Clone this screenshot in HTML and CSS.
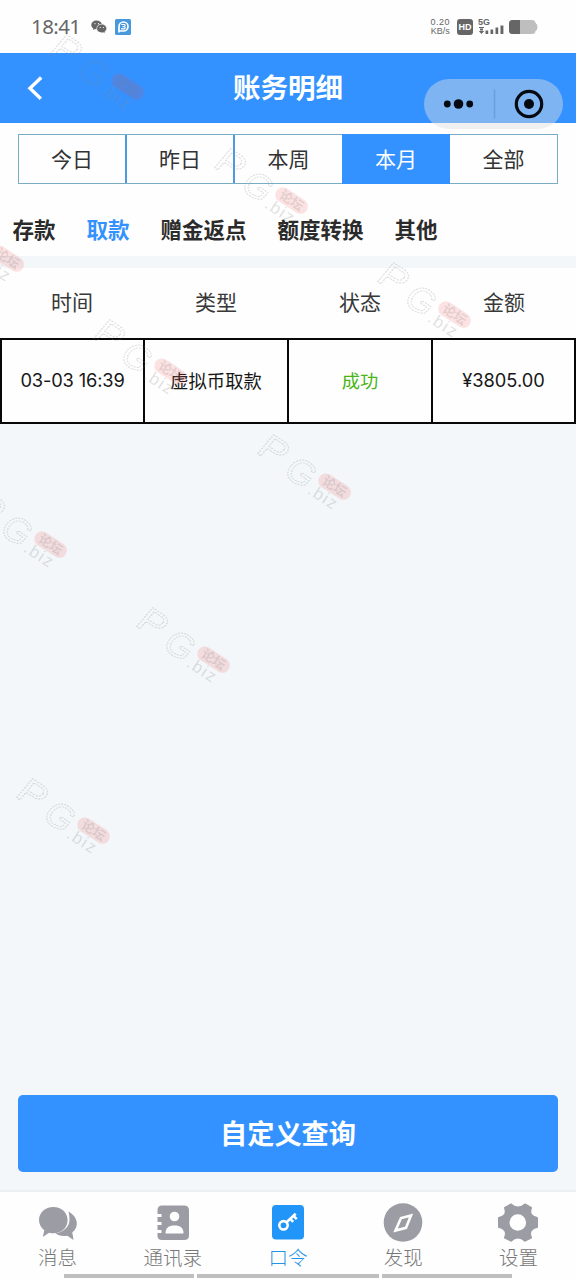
FILE: index.html
```html
<!DOCTYPE html>
<html lang="zh-CN">
<head>
<meta charset="utf-8">
<meta name="viewport" content="width=device-width, initial-scale=1">
<title>账务明细</title>
<link rel="stylesheet" href="styles.css">
</head>
<body>
<div class="app">
  <div class="status">
    <span class="clock">18:41</span>
    <svg class="wechat" width="16" height="14" viewBox="0 0 16 14"><path fill="#666" d="M5.6.5C2.6.5.3 2.4.3 4.9c0 1.4.8 2.6 2 3.400l-.5 1.700 2-1c.7.2 1.200.2 1.900.2C5.200 6 7.500 4 10.800 4 10.300 2 8.200.5 5.600.5z"/><path fill="#666" stroke="#fff" stroke-width=".4" d="M10.700 4.200c-2.700 0-4.900 1.900-4.900 4.300s2.200 4.200 4.900 4.200c.6 0 1.200-.1 1.700-.3l1.700.9-.4-1.500c1.100-.8 1.900-1.900 1.900-3.300 0-2.400-2.200-4.300-4.900-4.300z"/><g fill="#fff"><circle cx="4" cy="3.700" r=".6"/><circle cx="7.400" cy="3.700" r=".6"/><circle cx="9.200" cy="7.500" r=".6"/><circle cx="12.400" cy="7.500" r=".6"/></g></svg>
    <svg class="appicon" width="16" height="16" viewBox="0 0 16 16"><rect width="16" height="16" rx="1.500" fill="#4798dc"/><path d="M4 13.500V7.500a4.500 4.500 0 1 1 4.500 4.500H4" fill="none" stroke="#fff" stroke-width="1.700"/><path d="M6.300 5.500h3.200q1.400 1-.1 2.100H7.500m1.800 0q2 1.200 0 2.300H6" fill="none" stroke="#fff" stroke-width="1.100"/></svg>
    <span class="spacer"></span>
    <span class="speed"><span>0.20</span><span>KB/s</span></span>
    <span class="hd">HD</span>
    <span class="signal"><span class="fiveg">5G</span>
      <svg width="27" height="18" viewBox="0 0 27 18"><path fill="#666" d="M1 9h5v1H1zM2 10.500h3v2H2zM.8 13h5.400L3.500 16zM7.500 12.500h2.700V16H7.500zM12.500 11.500h2.700V16h-2.700zM17.500 9.500h2.700V16h-2.700zM22.500 7.500h2.900V16h-2.900z"/></svg>
    </span>
    <svg class="battery" width="29" height="14" viewBox="0 0 29 14"><rect width="26.500" height="14" rx="3.500" fill="#bebebe"/><path fill="#bebebe" d="M25 3h1.500q2 1 2 4t-2 4H25z"/><path fill="#666" d="M3.500 0H11v14H3.500A3.500 3.500 0 0 1 0 10.500v-7A3.500 3.500 0 0 1 3.500 0z"/></svg>
  </div>
  <header class="header">
    <svg class="back" width="18" height="26" viewBox="0 0 18 26"><path d="M16.200 2.500 5 13.200l10.800 10.500" fill="none" stroke="#fff" stroke-width="3.400"/></svg>
    <h1 class="title">账务明细</h1>
    <div class="capsule">
      <svg width="139" height="50" viewBox="0 0 139 50"><g fill="#050a12"><circle cx="23.300" cy="25" r="3.400"/><circle cx="34.500" cy="25" r="4.800"/><circle cx="45.700" cy="25" r="3.400"/><circle cx="105" cy="25" r="5"/></g><circle cx="105" cy="25" r="12.700" fill="none" stroke="#050a12" stroke-width="3.200"/><path d="M70.500 10.500v29" stroke="#689fdc" stroke-width="1.500"/></svg>
    </div>
  </header>
  <section class="filters">
    <div class="periods">
      <span class="period">今日</span><span class="period">昨日</span><span class="period">本周</span><span class="period on">本月</span><span class="period">全部</span>
    </div>
    <div class="kinds">
      <span>存款</span><span class="current">取款</span><span>赠金返点</span><span>额度转换</span><span>其他</span>
    </div>
  </section>
  <section class="records">
    <div class="head"><span>时间</span><span>类型</span><span>状态</span><span>金额</span></div>
    <div class="row"><span class="cell date">03-03 16:39</span><span class="cell">虚拟币取款</span><span class="cell ok">成功</span><span class="cell amount">¥3805.00</span></div>
  </section>
  <main class="blank"></main>
  <button class="query">自定义查询</button>
  <nav class="nav">
    <span class="item"><svg width="40" height="40" viewBox="0 0 40 40"><path fill="#9b9ca4" d="M15.300 4C7 4 1 9.800 1 17c0 4.200 2 7.800 5.300 10.200L4.800 34l6.300-4.200c10.800 2.400 18.500-4.200 18.500-12.800C29.600 9.800 23.600 4 15.300 4z"/><path fill="#9b9ca4" d="M30.500 8.500C37 12 39 17.500 38.800 21c-.2 4-2 6.200-4.500 8.200L35.500 37l-6.200-4.300c-5.300.7-9.300-.3-11.600-2.500 7.500-.8 13.800-6.500 13.800-13.200 0-3.200-.3-6-1-8.500z"/></svg><span>消息</span></span>
    <span class="item"><svg width="40" height="40" viewBox="0 0 40 40"><path fill="#9b9ca4" d="M9 2.500h22q5 0 5 5v25q0 4.500-5 4.500H9q-4.500 0-4.500-4.500V30h4v-3h-4v-5h4v-3h-4v-5h4v-3h-4V7.500q0-5 4.500-5z"/><circle cx="21.500" cy="13.500" r="4.800" fill="#fff"/><path fill="#fff" d="M12.500 30.500c0-5.500 3-8 9-8s9 2.500 9 8z"/></svg><span>通讯录</span></span>
    <span class="item active"><svg width="40" height="40" viewBox="0 0 40 40"><rect x="4" y="2" width="32" height="34.500" rx="4" fill="#2196f8"/><g fill="none" stroke="#fff" stroke-width="2.600"><circle cx="15.500" cy="22.300" r="4.200"/><path d="m18.500 19.300 9.200-8.500m-5.500 5.100 3 3m.3-6 3.200 3.200"/></g></svg><span>口令</span></span>
    <span class="item"><svg width="40" height="40" viewBox="0 0 40 40"><circle cx="20" cy="19.500" r="19.300" fill="#9b9ca4"/><path d="m28 12.500-10 2.500-5.500 12.500 10.500-2.700z" fill="none" stroke="#fff" stroke-width="2.600"/></svg><span>发现</span></span>
    <span class="item"><svg width="40" height="40" viewBox="0 0 40 40"><path fill="#9b9ca4" stroke="#9b9ca4" stroke-width="2" stroke-linejoin="round" d="M13 1.500q2.500 3 7 3t7-3l6 3.300Q31.500 9 33 11.500t6 3.500v9q-4 .5-6 3.500t0 7l-6 3.200q-3-3.200-7-3.200t-7 3.200l-6-3.200q2-4 0-7T1 24v-9q4.500-1 6-3.500t0-6.700z"/><circle cx="19.800" cy="19.500" r="8.300" fill="#fff"/></svg><span>设置</span></span>
  </nav>
  <div class="homebar"><i></i><i class="mid"></i><i></i></div>
  <svg class="marks" width="576" height="1280" viewBox="0 0 576 1280">
    <defs>
      <g id="mark">
        <g transform="rotate(33)">
          <g transform="skewX(-7)">
            <text class="letter" x="10" y="15" textLength="27" lengthAdjust="spacingAndGlyphs">P</text>
            <text class="letter" x="45" y="19">G</text>
          </g>
          <rect x="76" y="-7" width="36" height="15" rx="7.500" class="pill"/>
          <text class="forum" x="81" y="5">论坛</text>
          <text class="biz" x="74" y="21">.biz</text>
        </g>
      </g>
    </defs>
    <use href="#mark" x="49" y="35"/><use href="#mark" x="213" y="149"/><use href="#mark" x="-71" y="207"/><use href="#mark" x="376" y="263"/><use href="#mark" x="92" y="320"/><use href="#mark" x="256" y="435"/><use href="#mark" x="-28" y="493"/><use href="#mark" x="135" y="608"/><use href="#mark" x="15" y="779"/>
  </svg>
</div>
</body>
</html>
```
FILE: styles.css
```css
* { box-sizing: border-box; }
body { margin: 0; background: #f3f7fa; font-family: "Noto Sans", "Noto Sans CJK SC", sans-serif; }
.app { position: relative; display: flex; flex-direction: column; width: 576px; height: 1280px; overflow: hidden; }
.status { display: flex; align-items: center; height: 53px; padding: 0 38px 0 31px; background: #fefefe; color: #666; }
.clock { width: 49px; font: 20.500px/53px "Noto Sans", sans-serif; letter-spacing: -.6px; white-space: nowrap; padding-bottom: 0; }
.wechat { margin-left: 11px; }
.appicon { margin-left: 8px; }
.spacer { flex: 1; }
.speed { display: flex; flex-direction: column; font: 9px/9px "Liberation Sans", sans-serif; text-align: center; }
.speed span { display: block; height: 9px; }
.speed span:first-child { letter-spacing: .5px; }
.hd { width: 16px; height: 16px; margin-left: 7px; border-radius: 3px; background: #666; color: #fff; font: bold 9px/16px "Liberation Sans", sans-serif; text-align: center; }
.signal { position: relative; width: 27px; height: 18px; margin-left: 5px; }
.signal svg { display: block; }
.fiveg { position: absolute; left: 0; top: -1px; font: bold 9px/10px "Liberation Sans", sans-serif; }
.battery { margin-left: 4px; }
.header { position: relative; display: flex; justify-content: center; height: 70px; background: #3392ff; }
.back { position: absolute; left: 25px; top: 22px; }
.title { margin: 0; color: #fff; font: bold 27.500px/67px "Noto Sans CJK SC", sans-serif; }
.capsule { position: absolute; right: 13px; top: 26px; z-index: 1; height: 50px; border-radius: 25px; background: rgba(224, 224, 224, .44); }
.capsule svg { display: block; }
.filters { height: 133px; padding: 11px 18px 0; background: #fefefe; }
.periods { display: grid; grid-template-columns: 108px 108px 107px 108px 1fr; height: 50px; border: 1px solid #79adc6; }
.period { border-right: 2px solid #4c9ae0; color: #333; font: 21px/47px "Noto Sans CJK SC", sans-serif; text-align: center; }
.period:last-child { border-right: 0; }
.period:nth-child(3) { border-right: 0; }
.period.on { margin: -1px 0; border: 0; background: #3392ff; color: #fff; line-height: 49px; }
.kinds { display: flex; gap: 31px; margin-left: -5.500px; color: #2b2b2b; font: bold 21.500px/90px "Noto Sans CJK SC", sans-serif; }
.kinds span { white-space: nowrap; }
.kinds .current { color: #3392ff; }
.records { margin-top: 12px; background: #fefefe; }
.head, .row { display: grid; grid-template-columns: repeat(4, 1fr); text-align: center; }
.head { height: 70px; color: #383838; font: 21px/66px "Noto Sans CJK SC", sans-serif; }
.row { height: 86px; border: 2px solid #080808; color: #171717; font: 18.300px/80px "Noto Sans CJK SC", sans-serif; }
.row { grid-template-columns: 141px 144px 144px 143px; }
.cell + .cell { border-left: 2px solid #080808; }
.date, .amount { font-family: Inter, sans-serif; font-size: 18.300px; line-height: 81px; }
.date { letter-spacing: -.15px; }
.ok { color: #4ab516; }
.blank { flex: 1; }
.query { height: 77px; margin: 0 18px 18px; padding: 0 0 2px; border: 0; border-radius: 5px; background: #3392ff; color: #fff; font: bold 27.200px/73px "Noto Sans CJK SC", sans-serif; }
.nav { display: grid; grid-template-columns: repeat(5, 1fr); height: 84px; padding-top: 10px; border-top: 2px solid #eceff4; background: #fefefe; }
.item { display: flex; flex-direction: column; align-items: center; padding-top: 1px; color: #777; font: 300 19.500px/28px "Noto Sans CJK SC", sans-serif; }
.item svg { display: block; }
.active { color: #2593e5; }
.homebar { display: flex; gap: 3px; justify-content: center; height: 6px; background: #fefefe; }
.homebar i { width: 130px; height: 4px; background: #bfbfbf; }
.homebar .mid { width: 182px; }
.marks { position: absolute; inset: 0; z-index: 2; pointer-events: none; }
.letter { font: 36px "Liberation Sans", sans-serif; fill: none; stroke: #888; stroke-opacity: .3; stroke-width: 1; stroke-dasharray: 2 1; }
.pill { fill: #f04444; fill-opacity: .15; }
.forum { font: bold 13px "Noto Sans CJK SC", sans-serif; fill: #777; fill-opacity: .2; }
.biz { font: 17px "Liberation Sans", sans-serif; fill: #888; fill-opacity: .25; letter-spacing: 1.500px; }
```
